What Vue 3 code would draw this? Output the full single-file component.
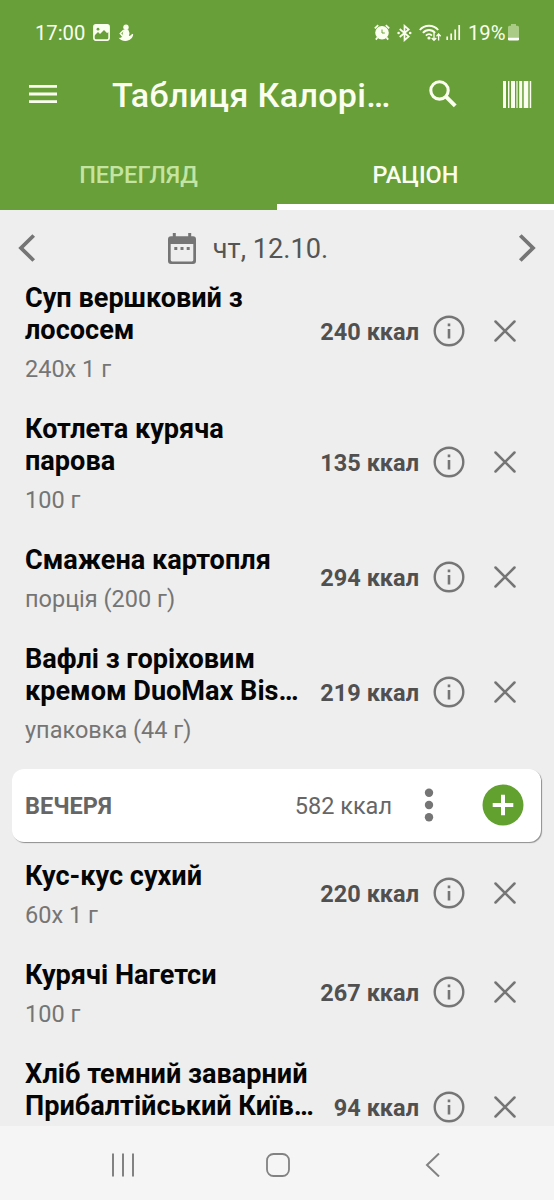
<script setup>
const lunch = [
  { lines: ['Суп вершковий з', 'лососем'], portion: '240x 1 г', kcal: 240 },
  { lines: ['Котлета куряча', 'парова'], portion: '100 г', kcal: 135 },
  { lines: ['Смажена картопля'], portion: 'порція (200 г)', kcal: 294 },
  { lines: ['Вафлі з горіховим', 'кремом DuoMax Bis…'], portion: 'упаковка (44 г)', kcal: 219 },
]
const dinner = [
  { lines: ['Кус-кус сухий'], portion: '60x 1 г', kcal: 220 },
  { lines: ['Курячі Нагетси'], portion: '100 г', kcal: 267 },
  { lines: ['Хліб темний заварний', 'Прибалтійський Київ…'], portion: '', kcal: 94 },
]
const entries = [...lunch, { header: true, name: 'ВЕЧЕРЯ', kcal: 582 }, ...dinner]
</script>

<template>
  <div class="screen">
    <header class="top">
      <div class="status">
        <span class="clock">17:00</span>
        <svg class="pic" width="17" height="17" viewBox="0 0 17 17">
          <rect x="0.9" y="0.9" width="15.2" height="15.2" rx="2" fill="none" stroke="#fbfff0" stroke-width="1.6" />
          <path d="M1 1h15v7l-2 1-3-3-4 4-2-2-4 4z" fill="#fbfff0" />
          <circle cx="5" cy="5.2" r="1.4" fill="#689f38" />
          <path d="M2 12.5l3-3 2 2L11 7.500l4 4V14H2z" fill="#689f38" />
        </svg>
        <svg class="figure" width="16" height="18" viewBox="0 0 16 18">
          <circle cx="8" cy="3.200" r="2.700" fill="#fbfff0" />
          <path d="M6 5.500h4.200l1.300 3.500-.6 3c1.500-.2 2.500-.8 3-2.200l1.300.4c-.2 3.600-3.400 6.400-7.500 6.800-3 .2-5.800-1.200-7-3.200 1.800.4 2.700-.2 3.500-1.500L5 8z" fill="#fbfff0" />
          <path d="M5.800 6L2.300 9.500l2.500 3" fill="none" stroke="#fbfff0" stroke-width="1.500" />
        </svg>
        <span class="grow"></span>
        <svg class="alarm" width="16" height="17" viewBox="0 0 16 17">
          <circle cx="8" cy="8.700" r="6.800" fill="#fbfff0" />
          <path d="M.8 4.300L4.200 1.200M15.200 4.300l-3.400-3.100M3.500 13.500L1.800 15.600M12.500 13.500l1.700 2.100" stroke="#fbfff0" stroke-width="1.800" />
          <path d="M8 5.500v3.500h2.800" fill="none" stroke="#689f38" stroke-width="1" />
        </svg>
        <svg class="bt" width="15" height="18" viewBox="0 0 15 18">
          <path d="M2.700 5l9 7.500-4.200 3.700V1.800l4.200 3.700-9 7.500" fill="none" stroke="#fbfff0" stroke-width="1.700" />
          <circle cx="1.600" cy="9" r="1.300" fill="#fbfff0" />
          <circle cx="13.200" cy="9" r="1.300" fill="#fbfff0" />
        </svg>
        <svg class="wifi" width="23" height="18" viewBox="0 0 23 18">
          <path d="M.8 6C5.500.4 14.500.4 19.200 6M3.900 8.900c3.400-3.900 8.800-3.900 12.200 0M6.900 11.600c1.900-2 4.400-2 6 0" fill="none" stroke="#fbfff0" stroke-width="1.900" />
          <circle cx="10" cy="14" r="1.600" fill="#fbfff0" />
          <path d="M15 9v7M12.700 14l2.300 2.300 2.300-2.300M19.600 16.500V10M17.500 12.200l2.100-2.200 2.100 2.200" fill="none" stroke="#fbfff0" stroke-width="1.300" />
        </svg>
        <svg class="signal" width="15" height="17" viewBox="0 0 15 17">
          <path d="M1.200 16v-3.500M5.200 16v-6.500M9.200 16V5.500M13.200 16V1" stroke="#fbfff0" stroke-width="1.700" />
        </svg>
        <span class="percent">19%</span>
        <svg class="battery" width="11" height="17" viewBox="0 0 11 17">
          <path d="M3 0h5v1.800h1.500q1.500 0 1.500 1.500V14H0V3.300q0-1.500 1.500-1.500H3z" fill="#a9cb85" />
          <path d="M0 13.700h11v1.500q0 1.300-1.300 1.300H1.300Q0 16.500 0 15.200z" fill="#fff" />
        </svg>
      </div>
      <div class="appbar">
        <svg class="menu" width="28" height="20" viewBox="0 0 28 20">
          <path d="M0 2.300h28M0 10h28M0 17.700h28" stroke="#fbfff0" stroke-width="2.800" />
        </svg>
        <h1>Таблиця Калорі…</h1>
        <svg class="search" width="28" height="28" viewBox="0 0 28 28">
          <circle cx="10.500" cy="10.400" r="8.700" fill="none" stroke="#fbfff0" stroke-width="3.100" />
          <path d="M16.500 16.200l9.700 9.700" stroke="#fbfff0" stroke-width="4" />
        </svg>
        <svg class="barcode" width="29" height="27" viewBox="0 0 29 27">
          <path d="M0 0h3v27H0zM5 0h1.400v27H5zM8 0h4v27H8zM13.400 0h1.200v27h-1.200zM16.200 0h3v27h-3zM20.700 0h4.600v27h-4.600zM26.700 0h1.500v27h-1.500z" fill="#fbfff0" />
        </svg>
      </div>
      <nav class="tabs">
        <div class="tab">ПЕРЕГЛЯД</div>
        <div class="tab active">РАЦІОН</div>
      </nav>
    </header>

    <section class="date">
      <svg width="18" height="28" viewBox="0 0 18 28"><path d="M15.700 1.500L3 14l12.700 12.500" fill="none" stroke="#757575" stroke-width="3.800" /></svg>
      <div class="day">
        <svg width="28" height="32" viewBox="0 0 28 32">
          <path d="M4.800 0h3v3.200h12.400V0h3v3.200H25q3 0 3 3V28q0 3-3 3H3q-3 0-3-3V6.200q0-3 3-3h1.800zM2.700 11v16q0 1.400 1.400 1.400h19.800q1.400 0 1.400-1.400V11z" fill="#757575" fill-rule="evenodd" />
          <path d="M6.300 14h3v3h-3zM12.500 14h3v3h-3zM18.700 14h3v3h-3z" fill="#757575" />
        </svg>
        <span>чт, 12.10.</span>
      </div>
      <svg width="18" height="28" viewBox="0 0 18 28"><path d="M2.300 1.500L15 14 2.300 26.500" fill="none" stroke="#757575" stroke-width="3.800" /></svg>
    </section>

    <main class="list">
      <template v-for="(e, i) in entries" :key="i">
        <div v-if="e.header" class="meal">
          <strong>{{ e.name }}</strong>
          <span class="total">{{ e.kcal }} ккал</span>
          <svg class="dots" width="10" height="34" viewBox="0 0 10 34">
            <g fill="#757575"><circle cx="5" cy="4.700" r="4.200" /><circle cx="5" cy="17" r="4.200" /><circle cx="5" cy="29.300" r="4.200" /></g>
          </svg>
          <svg width="42" height="42" viewBox="0 0 42 42">
            <circle cx="21" cy="21" r="20.500" fill="#62a12f" />
            <path d="M10.700 21h20.600M21 10.700v20.600" stroke="#fff" stroke-width="4" />
          </svg>
        </div>
        <article v-else class="item">
          <div class="info">
            <h2><span v-for="line in e.lines" :key="line">{{ line }}</span></h2>
            <p>{{ e.portion }}</p>
          </div>
          <div class="side">
            <strong class="kcal">{{ e.kcal }} ккал</strong>
            <svg class="about" width="32" height="32" viewBox="0 0 32 32">
              <circle cx="16" cy="16" r="14.300" fill="none" stroke="#757575" stroke-width="2.400" />
              <path d="M14.700 8.500h2.600v2.800h-2.600zM14.700 14h2.600v9.500h-2.600z" fill="#757575" />
            </svg>
            <svg width="22" height="22" viewBox="0 0 22 22"><path d="M1.500 1.500l19 19M20.500 1.500l-19 19" stroke="#757575" stroke-width="2.500" stroke-linecap="round" /></svg>
          </div>
        </article>
      </template>
    </main>

    <footer class="system">
      <svg width="24" height="24" viewBox="0 0 24 24"><path d="M2 .5v23M12 .5v23M22 .5v23" stroke="#828282" stroke-width="2" /></svg>
      <svg width="24" height="24" viewBox="0 0 24 24"><rect x="1" y="1" width="22" height="22" rx="6.500" fill="none" stroke="#828282" stroke-width="1.800" /></svg>
      <svg width="24" height="24" viewBox="0 0 24 24"><path d="M18 .5L6 12l12 11.500" fill="none" stroke="#828282" stroke-width="2" /></svg>
    </footer>
  </div>
</template>

<style>
body { margin: 0; }
</style>

<style scoped>
.screen {
  width: 554px;
  height: 1200px;
  display: flex;
  flex-direction: column;
  overflow: hidden;
  background: #eee;
  font-family: Roboto, "Liberation Sans", sans-serif;
}
svg { display: block; flex: none; }
span, strong, h1, h2, p { white-space: nowrap; }
.top { height: 210px; flex: none; background: #689f38; color: #fbfff0; }
.status { height: 65px; box-sizing: border-box; padding: 0 35px 0 35px; display: flex; align-items: center; font-size: 20.2px; }
.clock { width: 49px; }
.pic { margin-left: 9px; }
.figure { margin-left: 8px; }
.grow { flex: 1; }
.bt { margin-left: 7px; }
.wifi { margin-left: 7px; }
.signal { margin-left: 4px; }
.percent { width: 38px; margin-left: 7px; }
.battery { margin-left: 2px; }
.appbar { height: 58px; display: flex; align-items: center; padding: 0 22px 0 29px; }
h1 { flex: 1; margin: 1px 0 0 55px; font-size: 34px; letter-spacing: 0.33px; font-weight: 500; line-height: 40px; }
.search { margin-right: 46px; }
.tabs { height: 87px; display: grid; grid-template-columns: 1fr 1fr; }
.tab { padding-top: 37px; text-align: center; font-size: 23.5px; font-weight: 500; line-height: 30px; color: #c4e5a2; }
.active { border-bottom: 6px solid #fff; color: #fbfff0; height: 44px; }
.date { flex: none; height: 55.5px; box-sizing: border-box; padding: 21px 18px 0; display: flex; justify-content: space-between; align-items: flex-start; }
.date > svg { margin-top: 3px; }
.day { display: flex; align-items: center; gap: 17px; margin-right: 58px; font-size: 27.2px; line-height: 34px; color: #555; }
.day span { padding-top: 1px; }
.list { flex: 1; min-height: 0; overflow: hidden; }
.item { box-sizing: border-box; padding: 16.300px 38px 13.200px 25px; display: flex; align-items: center; }
.info { flex: 1; min-width: 0; }
h2 { margin: 0 0 9px; font-size: 27.1px; font-weight: 700; line-height: 32px; color: #050505; }
h2 span { display: block; }
p { margin: 0; height: 28.500px; line-height: 29px; font-size: 23.5px; color: #757575; }
.side { display: flex; align-items: center; margin-bottom: 3px; }
.kcal { padding-top: 2px; font-size: 23.5px; font-weight: 700; color: #505050; }
.about { margin: 0 29px 0 14px; }
.meal { height: 73px; box-sizing: border-box; margin: 11.500px 13px 1.500px 12px; padding: 0 17px 0 13px; display: flex; align-items: center; border-radius: 12px; background: #fff; box-shadow: 1px 1px 1px #8d8d8d; color: #666; font-size: 23.5px; }
.meal strong, .total { padding-top: 1px; }
.total { margin-left: auto; }
.dots { margin: 0 48px 0 32px; }
.system { height: 74px; flex: none; box-sizing: border-box; padding: 3px 43px 0 45px; display: grid; grid-template-columns: repeat(3, 1fr); place-items: center; background: #f5f5f5; }
</style>
